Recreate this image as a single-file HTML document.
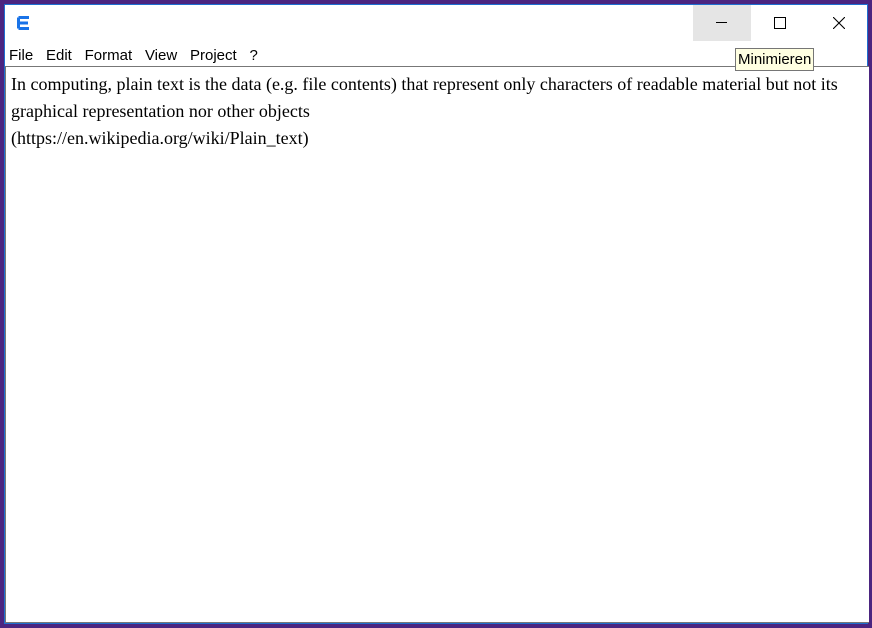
<!DOCTYPE html><html><head><style>
body{margin:0;width:872px;height:628px;background:#4b2580;position:relative;overflow:hidden;font-family:"Liberation Sans",sans-serif}
.win{position:absolute;left:4px;top:4px;width:864px;height:620px;background:#fff;border:1px solid #1e6fd0;box-sizing:border-box}
.menu{position:absolute;top:47px;left:9px;font-size:15px;color:#000}
.menu span{margin-right:12.8px}
.ed{position:absolute;left:5px;top:66px;width:864px;height:557px;border:1px solid #777;border-right:none;box-sizing:border-box;background:#fff;font-family:"Liberation Serif",serif;font-size:18px;line-height:27px;padding:4px 5px;color:#000}
.btn{position:absolute;top:5px;width:58px;height:36px}
.tip{position:absolute;left:735px;top:48px;background:#ffffe1;border:1px solid #767676;font-size:15px;padding:2px 2px;line-height:17px}
</style></head><body>
<div class="win"></div>
<svg style="position:absolute;left:17px;top:16px" width="13" height="14"><path d="M1.5 1.5H12M1.5 7H11M1.5 12.5H12M1.5 1.5V12.5" stroke="#1a73e8" stroke-width="3" fill="none"/></svg>
<div class="btn" style="left:693px;background:#e5e5e5"><div style="position:absolute;left:23px;top:17px;width:11px;height:1px;background:#000"></div></div>
<div class="btn" style="left:751px"><div style="position:absolute;left:23px;top:12px;width:10px;height:10px;border:1px solid #000"></div></div>
<svg style="position:absolute;left:833px;top:17px" width="12" height="12"><path d="M0 0L12 12M12 0L0 12" stroke="#000" stroke-width="1.1"/></svg>
<div class="menu"><span>File</span><span>Edit</span><span>Format</span><span>View</span><span>Project</span><span>?</span></div>
<div class="ed">In computing, plain text is the data (e.g. file contents) that represent only characters of readable material but not its graphical representation nor other objects<br>(https://en.wikipedia.org/wiki/Plain_text)</div>
<div class="tip">Minimieren</div>
</body></html>
